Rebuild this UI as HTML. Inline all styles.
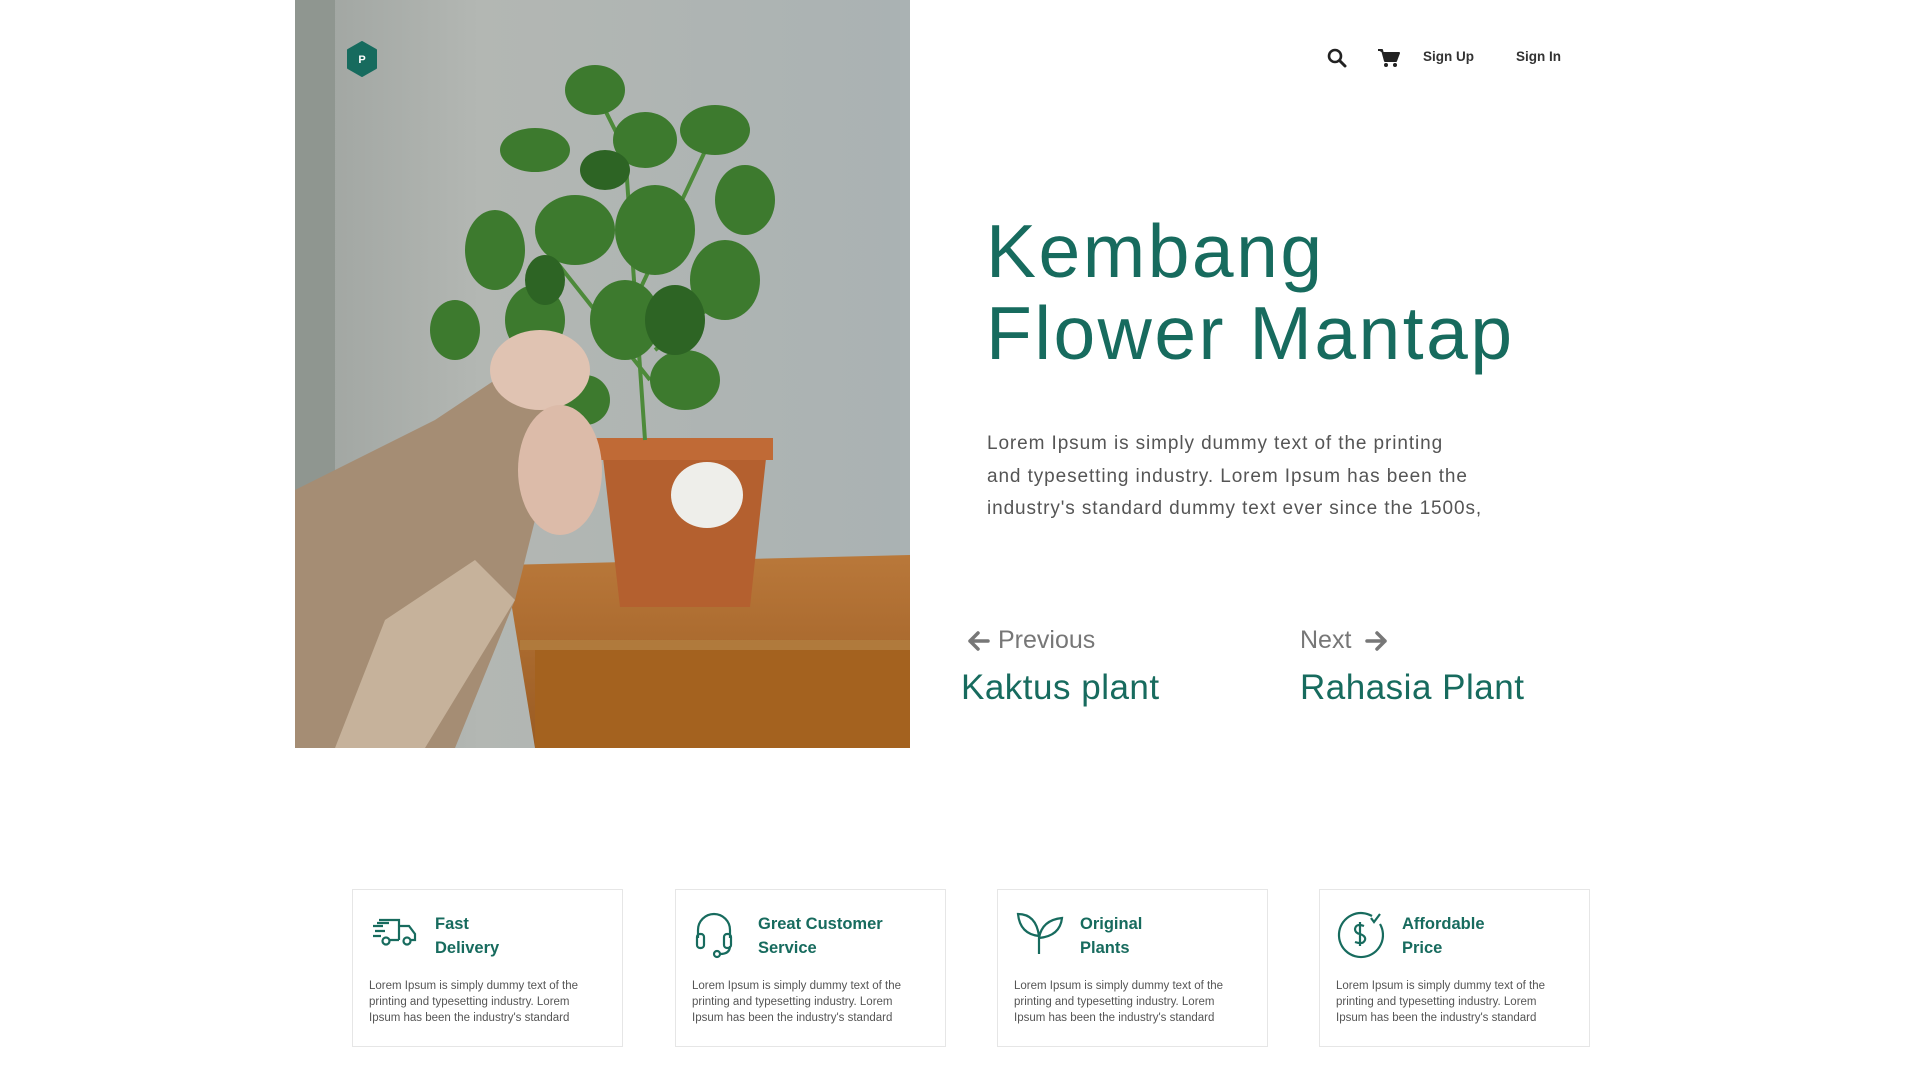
<!DOCTYPE html>
<html><head><meta charset="utf-8"><style>
*{margin:0;padding:0;box-sizing:border-box}
body{width:1920px;height:1078px;background:#fff;position:relative;overflow:hidden;font-family:"Liberation Sans",sans-serif}
.abs{position:absolute}
.nav{font-size:13.5px;color:#333;font-weight:bold;top:49px}
h1{position:absolute;left:986px;top:210px;font-weight:normal;font-size:75px;line-height:82px;color:#176b5e;letter-spacing:2.5px;white-space:nowrap}
.p{left:987px;top:428px;font-size:19px;line-height:32.5px;color:#555;letter-spacing:0.9px;white-space:nowrap}
.lbl{font-size:25px;color:#777;top:626px}
.pl{font-size:35px;color:#176b5e;top:668px;letter-spacing:0.5px}
.card{position:absolute;top:889px;width:271px;height:158px;border:1.5px solid #e6e6e6;background:#fff}
.card svg{position:absolute;left:16px;top:20px}
.card .t{position:absolute;left:82px;top:22px;font-size:16.5px;line-height:24px;color:#176b5e;font-weight:bold}
.card .d{position:absolute;left:16px;top:88px;font-size:11.5px;line-height:16px;color:#555;white-space:nowrap}
</style></head><body>
<svg class="abs" style="left:295px;top:0" width="615" height="748" viewBox="0 0 615 748">
<defs>
<linearGradient id="w" x1="0" y1="0" x2="1" y2="0"><stop offset="0" stop-color="#9ea39f"/><stop offset=".3" stop-color="#b3b7b3"/><stop offset="1" stop-color="#aab2b3"/></linearGradient>
<linearGradient id="t" x1="0" y1="0" x2="0" y2="1"><stop offset="0" stop-color="#b9783a"/><stop offset="1" stop-color="#9a5b22"/></linearGradient>
</defs>
<rect width="615" height="748" fill="url(#w)"/>
<rect width="40" height="748" fill="#8f9690"/>
<polygon points="210,565 615,555 615,748 240,748" fill="url(#t)"/>
<rect x="225" y="640" width="390" height="10" fill="#b07a3c"/>
<rect x="240" y="650" width="375" height="98" fill="#a4621f"/>
<polygon points="306,440 473,440 455,607 325,607" fill="#b4602f"/>
<rect x="300" y="438" width="178" height="22" fill="#c06a36"/>
<ellipse cx="412" cy="495" rx="36" ry="33" fill="#eeeeea"/>
<g stroke="#4d8a3a" stroke-width="4" fill="none"><path d="M350 440 L330 150 L300 90 M340 300 L420 130 M355 380 L260 260 M360 350 L450 280"/></g>
<g fill="#3d7a2e">
<ellipse cx="300" cy="90" rx="30" ry="25"/><ellipse cx="240" cy="150" rx="35" ry="22"/><ellipse cx="350" cy="140" rx="32" ry="28"/>
<ellipse cx="420" cy="130" rx="35" ry="25"/><ellipse cx="450" cy="200" rx="30" ry="35"/><ellipse cx="200" cy="250" rx="30" ry="40"/>
<ellipse cx="280" cy="230" rx="40" ry="35"/><ellipse cx="360" cy="230" rx="40" ry="45"/><ellipse cx="430" cy="280" rx="35" ry="40"/>
<ellipse cx="240" cy="320" rx="30" ry="35"/><ellipse cx="330" cy="320" rx="35" ry="40"/><ellipse cx="390" cy="380" rx="35" ry="30"/>
<ellipse cx="290" cy="400" rx="25" ry="25"/><ellipse cx="160" cy="330" rx="25" ry="30"/>
</g>
<g fill="#2d6424"><ellipse cx="310" cy="170" rx="25" ry="20"/><ellipse cx="380" cy="320" rx="30" ry="35"/><ellipse cx="250" cy="280" rx="20" ry="25"/></g>
<polygon points="0,490 140,420 200,380 260,400 240,520 220,600 160,748 0,748" fill="#a58d74"/>
<polygon points="90,620 180,560 220,600 130,748 40,748" fill="#c6b29b"/>
<ellipse cx="245" cy="370" rx="50" ry="40" fill="#e0c3b2"/>
<ellipse cx="265" cy="470" rx="42" ry="65" fill="#dcbba9"/>
</svg>
<svg class="abs" style="left:345px;top:41px" width="34" height="36" viewBox="0 0 34 36"><path d="M17 1 L31 9 L31 27 L17 35 L3 27 L3 9 Z" fill="#176b5e" stroke="#176b5e" stroke-width="2" stroke-linejoin="round"/><text x="17" y="22" font-size="11" fill="#fff" text-anchor="middle" font-family="Liberation Sans" font-weight="bold">P</text></svg>
<svg class="abs" style="left:1327px;top:48px" width="20" height="20" viewBox="0 0 20 20"><circle cx="8" cy="8" r="6" fill="none" stroke="#222" stroke-width="2.6"/><path d="M12.5 12.5 L18 18" stroke="#222" stroke-width="3" stroke-linecap="round"/></svg>
<svg class="abs" style="left:1378px;top:48px" width="22" height="20" viewBox="0 0 22 20"><path d="M0 2 H4 L7 13 H18 L21 5 H5" fill="#222" stroke="#222" stroke-width="2" stroke-linejoin="round"/><circle cx="8" cy="17" r="2" fill="#222"/><circle cx="17" cy="17" r="2" fill="#222"/></svg>
<div class="abs nav" style="left:1423px">Sign Up</div>
<div class="abs nav" style="left:1516px">Sign In</div>
<h1>Kembang<br>Flower Mantap</h1>
<div class="abs p">Lorem Ipsum is simply dummy text of the printing<br>and typesetting industry. Lorem Ipsum has been the<br>industry's standard dummy text ever since the 1500s,</div>
<svg class="abs" style="left:966px;top:630px" width="24" height="22" viewBox="0 0 24 22"><path d="M22 11 H4 M12 3 L4 11 L12 19" fill="none" stroke="#777" stroke-width="3.5" stroke-linecap="round" stroke-linejoin="round"/></svg>
<div class="abs lbl" style="left:998px">Previous</div>
<div class="abs pl" style="left:961px">Kaktus plant</div>
<div class="abs lbl" style="left:1300px">Next</div>
<svg class="abs" style="left:1365px;top:630px" width="24" height="22" viewBox="0 0 24 22"><path d="M2 11 H20 M12 3 L20 11 L12 19" fill="none" stroke="#777" stroke-width="3.5" stroke-linecap="round" stroke-linejoin="round"/></svg>
<div class="abs pl" style="left:1300px">Rahasia Plant</div>

<div class="card" style="left:352px">
<svg width="52" height="40" viewBox="0 0 52 40" fill="none" stroke="#176b5e" stroke-width="2.2"><path d="M10 10 H30 V30 M30 16 H40 L46 24 V30 H42 M20 30 H30 M4 26 H12 M4 16 H14 M6 21 H16 M8 13 H20"/><circle cx="17" cy="31" r="3.5"/><circle cx="38" cy="31" r="3.5"/></svg>
<div class="t">Fast<br>Delivery</div>
<div class="d">Lorem Ipsum is simply dummy text of the<br>printing and typesetting industry. Lorem<br>Ipsum has been the industry's standard</div></div>
<div class="card" style="left:675px">
<svg width="52" height="52" viewBox="0 0 52 52" fill="none" stroke="#176b5e" stroke-width="2.2" style="top:18px"><path d="M6 30 V22 A16 16 0 0 1 38 22 V30 M38 38 Q38 46 28 46"/><rect x="5" y="26" width="7" height="14" rx="3"/><rect x="32" y="26" width="7" height="14" rx="3"/><circle cx="25" cy="46" r="3"/></svg>
<div class="t">Great Customer<br>Service</div>
<div class="d">Lorem Ipsum is simply dummy text of the<br>printing and typesetting industry. Lorem<br>Ipsum has been the industry's standard</div></div>
<div class="card" style="left:997px">
<svg width="52" height="52" viewBox="0 0 52 52" fill="none" stroke="#176b5e" stroke-width="2.2" style="top:18px"><path d="M25 46 V26 M25 28 Q6 26 4 6 Q22 6 25 28 M25 30 Q28 12 48 10 Q46 28 25 30"/></svg>
<div class="t">Original<br>Plants</div>
<div class="d">Lorem Ipsum is simply dummy text of the<br>printing and typesetting industry. Lorem<br>Ipsum has been the industry's standard</div></div>
<div class="card" style="left:1319px">
<svg width="52" height="52" viewBox="0 0 52 52" fill="none" stroke="#176b5e" stroke-width="2.2" style="top:18px"><path d="M36 8 A22 22 0 1 0 44 16"/><path d="M35 10 L38 14 L44 6"/><path d="M28 18 Q20 15 19 21 Q19 25 24 26 Q30 28 29 32 Q27 37 19 34 M24 14 V38"/></svg>
<div class="t">Affordable<br>Price</div>
<div class="d">Lorem Ipsum is simply dummy text of the<br>printing and typesetting industry. Lorem<br>Ipsum has been the industry's standard</div></div>
</body></html>
